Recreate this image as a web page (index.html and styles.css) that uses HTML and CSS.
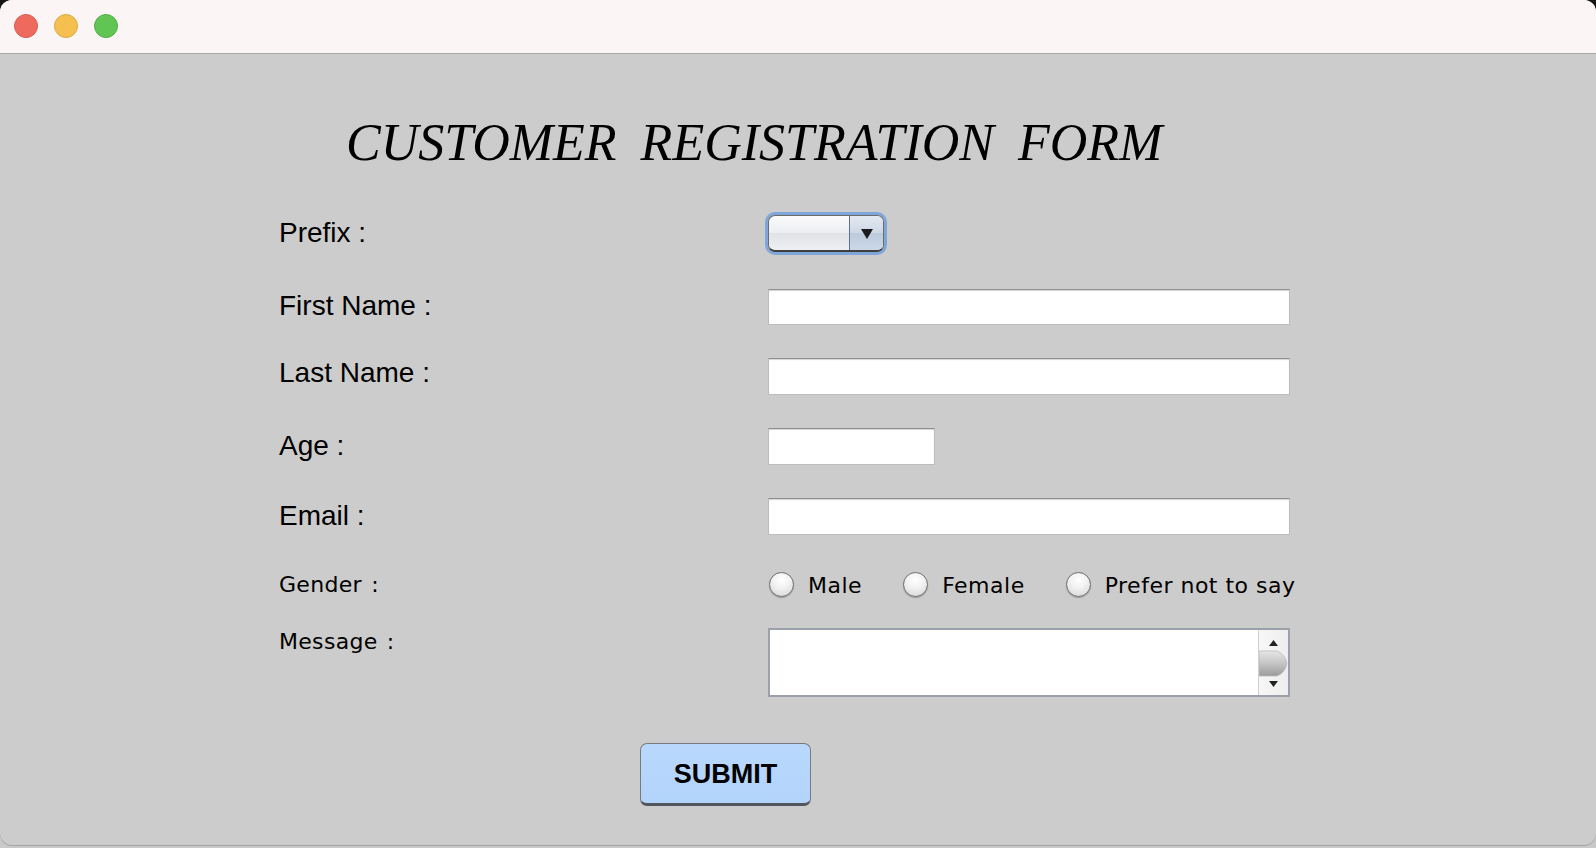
FILE: index.html
```html
<!DOCTYPE html>
<html>
<head>
<meta charset="utf-8">
<title>Customer Registration Form</title>
<link rel="stylesheet" href="styles.css">
</head>
<body>
<div class="window">
  <div class="titlebar">
    <span class="light red"></span>
    <span class="light yellow"></span>
    <span class="light green"></span>
  </div>
  <div class="content">
    <h1 class="title">CUSTOMER REGISTRATION FORM</h1>
    <div class="form">
      <div class="row row-prefix">
        <div class="label lbl-prefix">Prefix :</div>
        <div class="combo">
          <div class="combo-value"></div>
          <div class="combo-arrow"><span class="tri"></span></div>
        </div>
      </div>
      <div class="row row-first">
        <div class="label">First Name :</div>
        <div class="field wide"></div>
      </div>
      <div class="row row-last">
        <div class="label lbl-last">Last Name :</div>
        <div class="field wide"></div>
      </div>
      <div class="row row-age">
        <div class="label lbl-age">Age :</div>
        <div class="field short"></div>
      </div>
      <div class="row row-email">
        <div class="label lbl-age">Email :</div>
        <div class="field wide"></div>
      </div>
      <div class="row row-gender">
        <div class="label2 lbl-gender">Gender :</div>
        <div class="radios">
          <span class="radio"></span><span class="rtext">Male</span>
          <span class="radio"></span><span class="rtext">Female</span>
          <span class="radio"></span><span class="rtext">Prefer not to say</span>
        </div>
      </div>
      <div class="row row-message">
        <div class="label2 lbl-message">Message :</div>
        <div class="textarea">
          <div class="ta-body"></div>
          <div class="scrollbar">
            <svg width="29" height="65" viewBox="0 0 29 65">
              <defs>
                <linearGradient id="th" x1="0" y1="0" x2="0" y2="1">
                  <stop offset="0" stop-color="#e6e6e6"/>
                  <stop offset="0.5" stop-color="#c4c4c4"/>
                  <stop offset="1" stop-color="#9c9c9c"/>
                </linearGradient>
              </defs>
              <path d="M10 16 L14.5 10 L19 16 Z" fill="#222"/>
              <path d="M0 21 L18 21 Q26 24 28 33.5 Q26 43 18 46 L0 46 Z" fill="url(#th)" stroke="#b9b9b9" stroke-width="0.8"/>
              <path d="M10 51 L19 51 L14.5 57 Z" fill="#222"/>
            </svg>
          </div>
        </div>
      </div>
      <div class="submit-row">
        <button class="submit">SUBMIT</button>
      </div>
    </div>
  </div>
</div>
</body>
</html>
```
FILE: styles.css
```css
html, body {
  margin: 0;
  padding: 0;
}
body {
  width: 1596px;
  height: 848px;
  overflow: hidden;
  background: linear-gradient(#151515 0, #151515 60px, #c9c9c9 60px, #c9c9c9 100%);
}
.window {
  width: 1596px;
  height: 845px;
  border-radius: 12px;
  overflow: hidden;
  background: #cccccc;
  box-shadow: 0 1px 0 #a4a4a4;
}
.titlebar {
  height: 54px;
  border-bottom: 1px solid #a9a9a9;
  background: #fbf6f5;
  display: flex;
  align-items: flex-start;
  padding: 14px 0 0 14px;
  box-sizing: border-box;
  gap: 16px;
}
.light {
  width: 24px;
  height: 24px;
  border-radius: 50%;
  box-sizing: border-box;
}
.red { background: #ee6a5f; border: 1px solid #d95b50; }
.yellow { background: #f5c04f; border: 1px solid #dba945; }
.green { background: #61c554; border: 1px solid #53ae47; }

.content {
  padding-top: 60px;
}
.title {
  margin: 0 0 0 346px;
  font-family: "Liberation Serif", "Times New Roman", serif;
  font-style: italic;
  font-weight: normal;
  font-size: 52px;
  line-height: 58px;
  word-spacing: 11px;
  color: #000;
}
.form {
  margin-left: 279px;
  margin-top: 40px;
  display: flex;
  flex-direction: column;
}
.row {
  display: grid;
  grid-template-columns: 489px auto;
  align-items: start;
}
.row-prefix { height: 42px; }
.row-first { margin-top: 35px; height: 36px; }
.row-last { margin-top: 33px; height: 37px; }
.row-age { margin-top: 33px; height: 37px; }
.row-email { margin-top: 33px; height: 37px; }
.row-gender { margin-top: 35px; height: 26px; align-items: center; }
.row-message { margin-top: 32px; height: 69px; }

.label {
  font-family: "Liberation Sans", Arial, sans-serif;
  font-size: 28px;
  line-height: 32px;
  color: #000;
  margin-top: 1px;
  white-space: nowrap;
}
.lbl-prefix { margin-top: 5px; }
.lbl-last { margin-top: -1px; }
.lbl-age { margin-top: 2px; }
.label2 {
  font-family: "DejaVu Sans", "Lucida Grande", sans-serif;
  font-size: 22px;
  line-height: 26px;
  color: #000;
  white-space: nowrap;
  letter-spacing: 0.3px;
}
.lbl-gender { margin-top: 1px; word-spacing: 2px; }
.lbl-message { margin-top: 1px; word-spacing: 2px; }

/* combo */
.combo {
  margin-top: 3px;
  width: 116px;
  height: 37px;
  box-sizing: border-box;
  border: 1px solid #6b6b6b;
  border-bottom: 2px solid #3f3f3f;
  border-radius: 7px;
  box-shadow: 0 0 0 3px #7fa6d8;
  display: flex;
  overflow: hidden;
  background: linear-gradient(#fbfbfc, #eceef1 50%, #e0e2e6 51%, #eef0f3);
}
.combo-value {
  flex: 1;
}
.combo-arrow {
  width: 33px;
  border-left: 1px solid #5c6f8c;
  background: linear-gradient(#e3e9f1, #cdd8e6 50%, #bccadd 51%, #ccd8e7);
  display: flex;
  align-items: center;
  justify-content: center;
}
.tri {
  width: 0;
  height: 0;
  border-left: 6px solid transparent;
  border-right: 6px solid transparent;
  border-top: 10px solid #1b1b1b;
  margin-top: 1px;
}

/* text fields */
.field {
  height: 36px;
  box-sizing: border-box;
  background: #fff;
  border: 1px solid #bdbdbd;
  border-top: 1px solid #8f8f8f;
  box-shadow: inset 0 1px 1px #d4d4d4;
}
.row-last .field, .row-age .field, .row-email .field { height: 37px; }
.wide { width: 522px; }
.short { width: 167px; }

/* radios */
.radios {
  display: flex;
  align-items: center;
  font-family: "DejaVu Sans", "Lucida Grande", sans-serif;
  font-size: 22px;
  line-height: 26px;
  color: #000;
  margin-left: 1px;
  letter-spacing: 0.5px;
}
.radio {
  width: 25px;
  height: 25px;
  box-sizing: border-box;
  border-radius: 50%;
  border: 1px solid #6f6f6f;
  background: radial-gradient(circle at 50% 30%, #ffffff 0, #f2f2f2 40%, #d3d3d3 100%);
  box-shadow: 0 1px 1px rgba(0,0,0,0.25);
}
.rtext {
  margin-left: 14px;
  margin-right: 41px;
  margin-top: 3px;
  white-space: nowrap;
}

/* textarea */
.textarea {
  width: 522px;
  height: 69px;
  box-sizing: border-box;
  border: 2px solid #9ca1a9;
  background: #fff;
  display: flex;
}
.ta-body { flex: 1; }
.scrollbar {
  width: 29px;
  height: 65px;
  border-left: 1px solid #d0d0d0;
  background: linear-gradient(90deg, #f7f7f7, #eeeeee);
}
.scrollbar svg { display: block; }

/* submit */
.submit-row {
  margin-top: 46px;
  padding-left: 361px;
}
.submit {
  width: 171px;
  height: 63px;
  box-sizing: border-box;
  border: 1px solid #777a80;
  border-bottom: 3px solid #51555c;
  border-radius: 7px;
  background: linear-gradient(#b9d8fc, #b2d3fb);
  font-family: "Liberation Sans", Arial, sans-serif;
  font-weight: bold;
  font-size: 27px;
  color: #000;
  padding: 2px 0 0 0;
  display: block;
}
```
